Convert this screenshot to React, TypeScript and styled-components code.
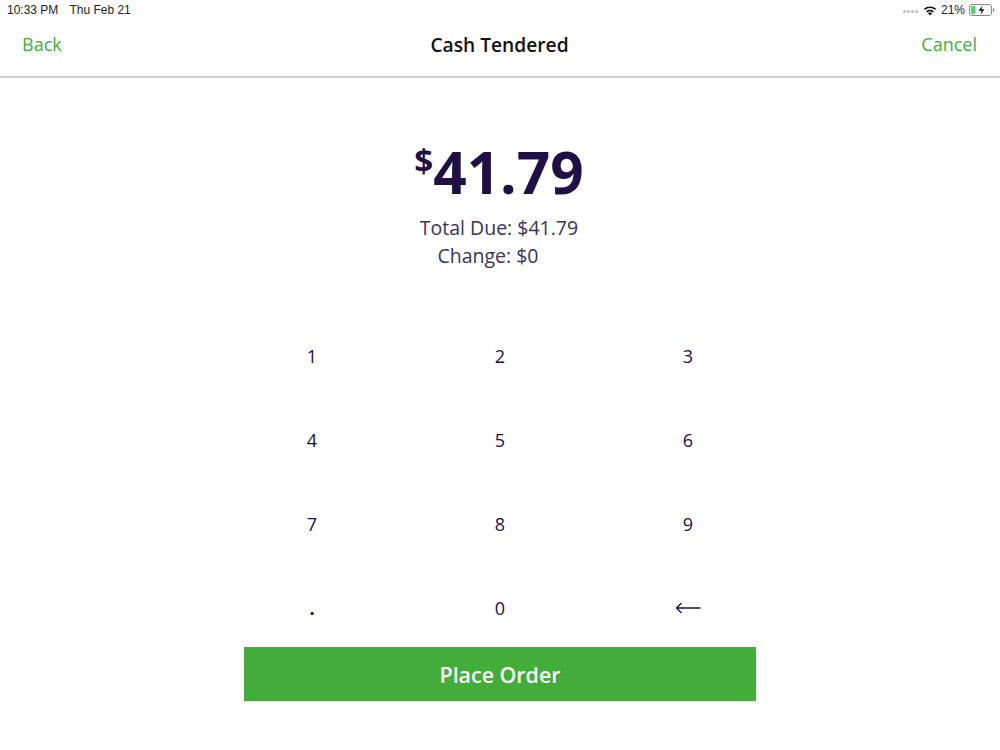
import React from 'react';
import styled, { createGlobalStyle } from 'styled-components';

const KEYS = ['1', '2', '3', '4', '5', '6', '7', '8', '9', '.', '0'];

const WifiIcon = () => (
  <svg width="14" height="11" viewBox="0 0 14 11">
    <path d="M7 10.600 4.900 8.200a3 3 0 0 1 4.200 0z" fill="#111" />
    <path d="M3.700 6.900a4.900 4.900 0 0 1 6.600 0" fill="none" stroke="#111" strokeWidth="1.600" />
    <path d="M1.400 4.400a8.200 8.200 0 0 1 11.200 0" fill="none" stroke="#111" strokeWidth="1.600" />
  </svg>
);

const BatteryIcon = () => (
  <svg width="26" height="12" viewBox="0 0 26 12">
    <rect x="0.500" y="0.500" width="22" height="11" rx="2.500" fill="none" stroke="#888" />
    <rect x="2" y="2" width="4.500" height="8" rx="1" fill="#4cd964" />
    <path d="M23.800 4v4c.9-.2 1.500-1 1.500-2s-.6-1.800-1.500-2z" fill="#888" />
    <path d="M13.500 1.500 9.500 6.800h3l-1 3.700 4-5.300h-3z" fill="#111" />
  </svg>
);

const BackArrow = () => (
  <svg width="26" height="12" viewBox="0 0 26 12">
    <path d="M25.500 6H1.500M6.500 1 1.500 6l5 5" fill="none" stroke="#1f0f45" strokeWidth="1.300" />
  </svg>
);

export default function App() {
  return (
    <Page>
      <GlobalStyle />
      <StatusBar>
        <StatusText>
          <span>10:33 PM</span>
          <span>Thu Feb 21</span>
        </StatusText>
        <StatusRight>
          <SignalDots>
            <i />
            <i />
            <i />
            <i />
          </SignalDots>
          <WifiIcon />
          <span>21%</span>
          <BatteryIcon />
        </StatusRight>
      </StatusBar>
      <NavBar>
        <NavLink>Back</NavLink>
        <NavTitle>Cash Tendered</NavTitle>
        <NavLink $right>Cancel</NavLink>
      </NavBar>
      <Summary>
        <Amount>
          <Currency>$</Currency>41.79
        </Amount>
        <SummaryLine>Total Due: $41.79</SummaryLine>
        <SummaryLine $offset>Change: $0</SummaryLine>
      </Summary>
      <Keypad>
        {KEYS.map((key) => (
          <Key key={key} $dot={key === '.'}>
            {key}
          </Key>
        ))}
        <Key>
          <BackArrow />
        </Key>
      </Keypad>
      <PlaceOrder>Place Order</PlaceOrder>
    </Page>
  );
}

const GlobalStyle = createGlobalStyle`
  html, body {
    margin: 0;
    padding: 0;
    background: #fff;
  }
`;

const Page = styled.div`
  width: 1000px;
  height: 750px;
  display: flex;
  flex-direction: column;
  align-items: center;
  overflow: hidden;
  font-family: 'Open Sans', sans-serif;
  color: #1f0f45;
`;

const StatusBar = styled.div`
  width: 100%;
  height: 20px;
  box-sizing: border-box;
  padding: 0 5px 0 7px;
  display: flex;
  align-items: center;
  justify-content: space-between;
  font-family: 'Liberation Sans', sans-serif;
  font-size: 12px;
  color: #222;
`;

const StatusText = styled.div`
  display: flex;
  gap: 11px;
`;

const StatusRight = styled.div`
  display: flex;
  align-items: center;
  gap: 4px;
`;

const SignalDots = styled.div`
  display: flex;
  gap: 1px;
  margin: 3px 1px 0 0;

  i {
    width: 3px;
    height: 3px;
    border-radius: 50%;
    background: #bbb;
  }
`;

const NavBar = styled.div`
  width: 100%;
  height: 58px;
  box-sizing: border-box;
  padding: 0 23px 8px 22px;
  display: flex;
  align-items: center;
  border-bottom: 2px solid #cfcfcf;
`;

const NavLink = styled.div<{ $right?: boolean }>`
  flex: 1;
  font-size: 18px;
  font-weight: 500;
  color: #3eb037;
  text-align: ${({ $right }) => ($right ? 'right' : 'left')};
`;

const NavTitle = styled.div`
  font-size: 19.2px;
  font-weight: 600;
  color: #111;
`;

const Summary = styled.div`
  margin-top: 61px;
  margin-right: 2px;
  display: flex;
  flex-direction: column;
  align-items: center;
`;

const Amount = styled.div`
  font-size: 58.5px;
  line-height: 65px;
  font-weight: 700;
  color: #1f0f45;
`;

const Currency = styled.span`
  font-size: 33px;
  position: relative;
  top: -21px;
`;

const SummaryLine = styled.div<{ $offset?: boolean }>`
  font-size: 19.5px;
  line-height: 28px;
  color: #38335a;
  padding-right: ${({ $offset }) => ($offset ? '22px' : '0')};
`;

const Keypad = styled.div`
  margin-top: 44px;
  width: 564px;
  display: grid;
  grid-template-columns: repeat(3, 188px);
  grid-auto-rows: 84px;
`;

const Key = styled.div<{ $dot?: boolean }>`
  display: flex;
  align-items: center;
  justify-content: center;
  font-size: 18px;
  font-weight: ${({ $dot }) => ($dot ? 700 : 400)};
  color: #1f0f45;
`;

const PlaceOrder = styled.div`
  margin-top: -3px;
  width: 512px;
  height: 54px;
  display: flex;
  align-items: center;
  justify-content: center;
  background: #42ad38;
  color: #fff;
  font-size: 21.4px;
  font-weight: 600;
`;
